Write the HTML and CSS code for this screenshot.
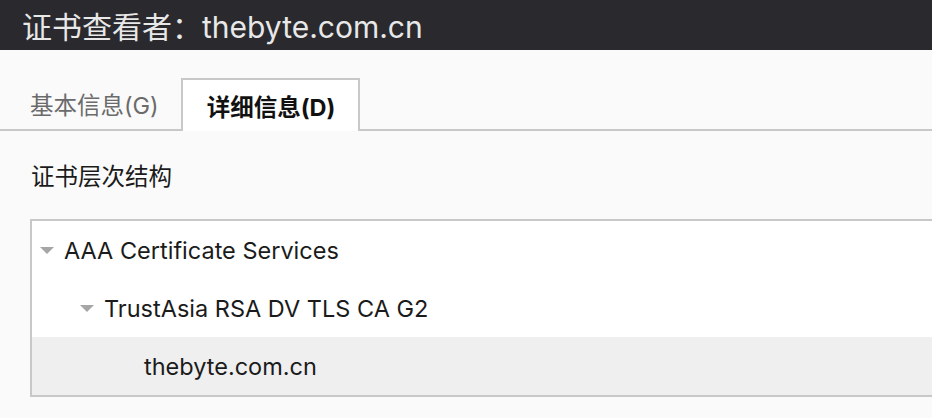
FILE: index.html
```html
<!DOCTYPE html>
<html lang="zh-CN">

<head>
    <meta charset="UTF-8">
    <meta name="viewport" content="width=device-width, initial-scale=1.0">
    <title>证书查看者</title>
    <link rel="stylesheet" href="styles.css">
</head>

<body>
    <header class="titlebar">
        <h1>证书查看者：thebyte.com.cn</h1>
    </header>

    <nav class="tabs">
        <div class="tab">基本信息(G)</div>
        <div class="tab active">详细信息(D)</div>
    </nav>

    <section class="details">
        <h2>证书层次结构</h2>

        <ul class="tree">
            <li class="row level-0"><span class="twisty"></span>AAA Certificate Services</li>
            <li class="row level-1"><span class="twisty"></span>TrustAsia RSA DV TLS CA G2</li>
            <li class="row level-2 selected">thebyte.com.cn</li>
        </ul>
    </section>
</body>

</html>
```
FILE: styles.css
```css
body {
    margin: 0;
    background-color: #fafafa;
    font-family: Inter, "Noto Sans CJK SC", sans-serif;
    color: #1b1b1b;
    overflow: hidden;
}

.titlebar {
    height: 50px;
    background-color: #2a2a2e;
    padding-left: 22px;
    display: flex;
    align-items: center;
}

.titlebar h1 {
    margin: 0;
    font-size: 30px;
    font-weight: normal;
    color: #e8e8e8;
}

.tabs {
    display: flex;
    margin-top: 28px;
    padding-left: 8px;
    border-bottom: 2px solid #c8c8c8;
    height: 51px;
}

.tab {
    padding: 0 20px 2px;
    font-size: 23.5px;
    color: #6b6b6b;
    display: flex;
    align-items: center;
    border: 2px solid transparent;
    border-bottom: none;
}

.tab.active {
    background-color: #fff;
    border-color: #c8c8c8;
    color: #111;
    font-weight: bold;
    margin-bottom: -2px;
    padding: 0 23px 0 24px;
}

.details {
    padding-left: 30px;
    overflow: hidden;
}

.details h2 {
    margin: 34px 0 0 1px;
    font-size: 23.5px;
    font-weight: normal;
    line-height: 24px;
}

.tree {
    list-style: none;
    margin: 30px -4px 0 0;
    padding: 0;
    background-color: #fff;
    border: 2px solid #c8c8c8;
}

.row {
    height: 58px;
    display: flex;
    align-items: center;
    font-size: 23.5px;
}

.level-0 {
    padding-left: 8px;
}

.level-1 {
    padding-left: 48px;
}

.level-2 {
    padding-left: 112px;
}

.row.selected {
    background-color: #efefef;
}

.twisty {
    width: 0;
    height: 0;
    border-left: 7px solid transparent;
    border-right: 7px solid transparent;
    border-top: 7px solid #a6a6a6;
    margin-right: 10px;
}
```
